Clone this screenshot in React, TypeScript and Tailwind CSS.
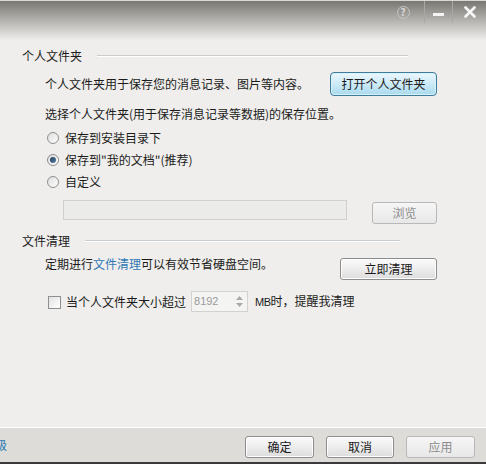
import React from 'react';

const font = "font-['Noto_Sans_CJK_SC','Noto_Sans',sans-serif]";

const btn =
  'h-[22px] rounded-[3px] border border-[#8d8d8d] bg-gradient-to-b from-[#fbfbfb] via-[#ededed] to-[#dcdcdc] text-[12px] leading-none text-[#1a1a1a] flex items-center justify-center shadow-[inset_0_0_0_1px_#ffffff]';
const btnDisabled =
  'h-[22px] rounded-[3px] border border-[#b8b8b8] bg-gradient-to-b from-[#f6f6f6] to-[#e8e8e8] text-[12px] leading-none text-[#8c8c8c] flex items-center justify-center';

const Radio = ({ checked, label }: { checked?: boolean; label: string }) => (
  <div className="h-[22px] flex items-center pl-[47px]">
    <span className="w-[12px] h-[12px] rounded-full border border-[#8e8f8f] bg-gradient-to-br from-[#dcdcdc] to-[#ffffff] flex items-center justify-center">
      {checked && <span className="w-[6px] h-[6px] rounded-full bg-gradient-to-br from-[#1f3d5a] to-[#5b83a6]" />}
    </span>
    <span className="ml-[6px] text-[12px] leading-4">{label}</span>
  </div>
);

const SectionTitle = ({ title, lineEnd }: { title: string; lineEnd: string }) => (
  <div className={`h-4 flex items-center pl-[22px] ${lineEnd}`}>
    <span className="text-[12px] leading-4">{title}</span>
    <span className="flex-1 ml-[15px] h-px bg-[#c9cdcf] border-b border-white box-content" />
  </div>
);

export default function App() {
  return (
    <div className={`w-[486px] h-[464px] bg-[#efeeec] flex flex-col text-[#1b1b1b] ${font} overflow-hidden`}>
      {/* title bar */}
      <div className="h-[40px] bg-gradient-to-b from-[#7a7873] via-[#b4b3af] to-[#eeedeb] border-t border-[#d8d8d6] flex justify-end items-start">
        <div className="h-[22px] w-[42px] flex items-center justify-center">
          <span className="w-[13px] h-[13px] rounded-full border border-[#c6c6c4] text-[#dcdcda] text-[10px] leading-none flex items-center justify-center font-bold">?</span>
        </div>
        <div className="h-[22px] w-px bg-[#a9a8a4]" />
        <div className="h-[22px] w-[27px] flex items-center justify-center pt-[5px]">
          <span className="w-[11px] h-[3px] bg-[#f4f4f4]" />
        </div>
        <div className="h-[22px] w-px bg-[#a9a8a4]" />
        <div className="h-[22px] w-[33px] flex items-center justify-center">
          <svg width="12" height="12" viewBox="0 0 12 12">
            <path d="M1.5 1.5 L10.5 10.5 M10.5 1.5 L1.5 10.5" stroke="#f7f7f7" strokeWidth="2.6" strokeLinecap="round" />
          </svg>
        </div>
      </div>

      {/* content */}
      <div className="flex-1 flex flex-col pt-[8px]">
        <SectionTitle title="个人文件夹" lineEnd="pr-[78px]" />

        <div className="mt-[8px] h-[24px] flex items-center pl-[45px] pr-[49px]">
          <span className="flex-1 text-[12px] leading-4">个人文件夹用于保存您的消息记录、图片等内容。</span>
          <div className="w-[107px] h-[24px] rounded-[4px] border border-[#3d7c9c] bg-gradient-to-b from-[#eaf7fd] via-[#cdeaf7] to-[#a9daee] shadow-[inset_0_0_0_1px_#d8f1fb] text-[12px] leading-none flex items-center justify-center">
            打开个人文件夹
          </div>
        </div>

        <div className="mt-[10px] h-4 pl-[45px] text-[12px] leading-4">选择个人文件夹(用于保存消息记录等数据)的保存位置。</div>

        <div className="mt-[5px] flex flex-col">
          <Radio label="保存到安装目录下" />
          <Radio checked label={'保存到"我的文档"(推荐)'} />
          <Radio label="自定义" />
        </div>

        <div className="mt-[7px] h-[23px] flex items-start pl-[63px] pr-[49px]">
          <div className="w-[284px] h-[20px] border border-[#cfcfcd] bg-[#ebebe9]" />
          <div className="flex-1" />
          <div className={`${btnDisabled} w-[65px] mt-[2px]`}>浏览</div>
        </div>

        <div className="mt-[10px]">
          <SectionTitle title="文件清理" lineEnd="pr-[86px]" />
        </div>

        <div className="mt-[7px] h-[24px] flex items-start pl-[45px] pr-[49px]">
          <span className="flex-1 text-[12px] leading-4">
            定期进行<span className="text-[#2f79b5]">文件清理</span>可以有效节省硬盘空间。
          </span>
          <div className={`${btn} w-[97px] mt-[2px]`}>立即清理</div>
        </div>

        <div className="mt-[11px] h-[21px] flex items-center pl-[48px]">
          <span className="w-[13px] h-[13px] border border-[#8e8f8f] bg-gradient-to-br from-[#e2e2e2] to-[#ffffff] mt-[2px]" />
          <span className="ml-[5px] text-[12px] leading-4">当个人文件夹大小超过</span>
          <div className="ml-[5px] w-[57px] h-[21px] border border-[#d2d2d0] bg-[#f4f4f3] flex items-center">
            <span className="flex-1 pl-[2px] text-[11px] leading-none text-[#9a9a9a] font-['Liberation_Sans',sans-serif]">8192</span>
            <div className="w-[12px] flex flex-col items-center gap-[3px] mr-[2px]">
              <svg width="7" height="4" viewBox="0 0 7 4"><path d="M0 4 L3.5 0 L7 4 Z" fill="#a9a9a9" /></svg>
              <svg width="7" height="4" viewBox="0 0 7 4"><path d="M0 0 L3.5 4 L7 0 Z" fill="#a9a9a9" /></svg>
            </div>
          </div>
          <span className="ml-[7px] text-[12px] leading-4">
            <span className="font-['Liberation_Sans',sans-serif] text-[11px] tracking-[-0.5px]">MB</span>时，提醒我清理
          </span>
        </div>
      </div>

      {/* footer */}
      <div className="h-[37px] border-t border-white bg-[#dddcd9] flex items-start pt-[8px] pr-[11px] border-b-2 border-b-[#3a3a3a]">
        <div className="w-[7px] overflow-hidden flex justify-end mt-[1px]">
          <span className="shrink-0 text-[12px] leading-4 text-[#2f79b5]">高级</span>
        </div>
        <div className="flex-1" />
        <div className={`${btn} w-[69px] h-[21px]`}>确定</div>
        <div className={`${btn} w-[68px] h-[21px] ml-[12px]`}>取消</div>
        <div className={`${btnDisabled} w-[69px] h-[21px] ml-[12px]`}>应用</div>
      </div>
    </div>
  );
}
